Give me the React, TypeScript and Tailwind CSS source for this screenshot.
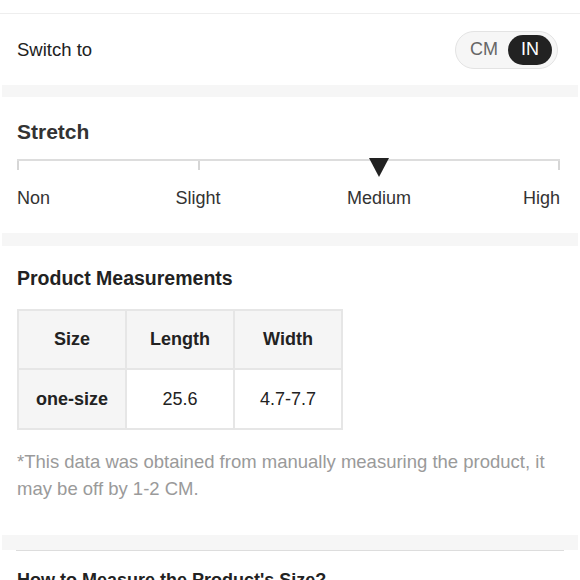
import React from 'react';

const font = { fontFamily: '"Liberation Sans", Arial, sans-serif' };

function Band({ h }: { h: string }) {
    return <div className={`mx-[2px] bg-[#f6f6f6] ${h}`} />;
}

export default function App() {
    return (
        <div className="w-[580px] bg-white text-[#222] overflow-hidden h-[580px]" style={font}>
            <div className="h-[13px]" />
            <div className="border-t border-[#eeeeee]" />

            {/* Unit switch */}
            <div className="h-[71px] flex items-center justify-between pl-[17px] pr-[22px]">
                <span className="text-[18.5px]">Switch to</span>
                <div className="flex items-center h-[38px] w-[103px] rounded-full border border-[#e3e3e3] bg-[#f6f6f6] pl-[14px] pr-[5px]">
                    <span className="text-[18px] text-[#666] flex-1">CM</span>
                    <span className="h-[30px] w-[44px] rounded-full bg-[#222] text-white text-[18px] flex items-center justify-center">
                        IN
                    </span>
                </div>
            </div>

            <Band h="h-[12px]" />

            {/* Stretch */}
            <div className="px-[17px] pt-[22px] pb-[23px]">
                <h2 className="text-[21px] leading-[26px] font-bold text-[#333]">Stretch</h2>
                <div className="relative mt-[14px] mr-[3px]">
                    <div className="grid grid-cols-3 border-t-2 border-[#dddddd]">
                        <div className="h-[9px] border-l-2 border-[#d6d6d6]" />
                        <div className="h-[9px] border-l-2 border-[#d6d6d6]" />
                        <div className="h-[9px] border-r-2 border-[#d6d6d6]" />
                    </div>
                    <svg
                        className="absolute left-[66.67%] -top-[1px] -translate-x-1/2"
                        width="20"
                        height="19"
                        viewBox="0 0 20 19"
                    >
                        <polygon points="0,0 20,0 10,19" fill="#222" />
                    </svg>
                    <div className="grid grid-cols-6 mt-[16px] text-[18px] leading-[24px] text-[#333]">
                        <span className="col-span-1 text-left">Non</span>
                        <span className="col-span-2 text-center">Slight</span>
                        <span className="col-span-2 text-center">Medium</span>
                        <span className="col-span-1 text-right">High</span>
                    </div>
                </div>
            </div>

            <Band h="h-[13px]" />

            {/* Product measurements */}
            <div className="px-[17px] pt-[20px] pb-[33px]">
                <h2 className="text-[19.5px] leading-[24px] font-bold text-[#222]">Product Measurements</h2>
                <table className="mt-[19px] border-collapse text-[18px] text-[#222]">
                    <tbody>
                        <tr className="h-[59px]">
                            <th className="w-[108px] border-2 border-[#e6e6e6] bg-[#f5f5f5] font-bold">Size</th>
                            <th className="w-[108px] border-2 border-[#e6e6e6] bg-[#f5f5f5] font-bold">Length</th>
                            <th className="w-[108px] border-2 border-[#e6e6e6] bg-[#f5f5f5] font-bold">Width</th>
                        </tr>
                        <tr className="h-[60px]">
                            <td className="border-2 border-[#e6e6e6] bg-[#f5f5f5] font-bold text-center">one-size</td>
                            <td className="border-2 border-[#e6e6e6] text-center">25.6</td>
                            <td className="border-2 border-[#e6e6e6] text-center">4.7-7.7</td>
                        </tr>
                    </tbody>
                </table>
                <p className="mt-[18px] text-[18.5px] leading-[27px] text-[#9a9a9a]">
                    *This data was obtained from manually measuring the product, it may be off by 1-2 CM.
                </p>
            </div>

            <Band h="h-[15px]" />
            <div className="mx-[16px] border-t border-[#dddddd]" />
            <div className="px-[17px] pt-[17px] text-[18px] leading-[24px] font-bold text-[#222]">
                How to Measure the Product's Size?
            </div>
        </div>
    );
}
